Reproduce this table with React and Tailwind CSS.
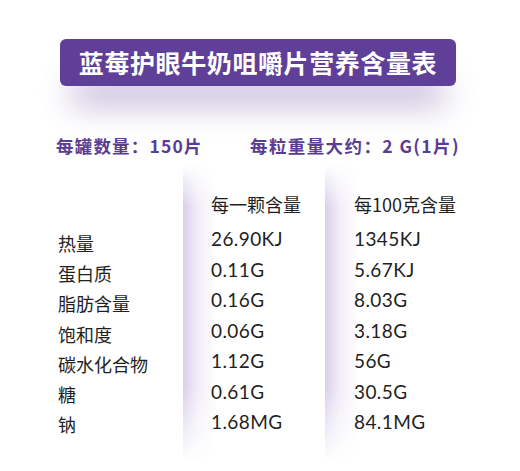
import React from "react";

const rows = [
  ["热量", "26.90KJ", "1345KJ"],
  ["蛋白质", "0.11G", "5.67KJ"],
  ["脂肪含量", "0.16G", "8.03G"],
  ["饱和度", "0.06G", "3.18G"],
  ["碳水化合物", "1.12G", "56G"],
  ["糖", "0.61G", "30.5G"],
  ["钠", "1.68MG", "84.1MG"],
];

const cjk = "font-['Noto_Sans_CJK_SC',sans-serif]";
const panel =
  "bg-[linear-gradient(to_bottom,#fff_0%,rgba(255,255,255,0)_14%,rgba(255,255,255,0)_72%,#fff_96%),linear-gradient(to_right,#d9cfea_0px,#f1ecf7_14px,#fff_34px)]";

const App = () => {
  return (
    <div className={`w-[520px] h-[471px] bg-white overflow-hidden ${cjk}`}>
      <div className="pt-[39px] pl-[60px]">
        <div className="w-[396px] h-[47px] rounded-[6px] bg-[#5f3f98] flex items-center justify-center shadow-[0_30px_32px_-12px_rgba(95,63,152,0.42)]">
          <h1 className="text-white text-[25px] font-bold tracking-[0.6px] leading-none">
            蓝莓护眼牛奶咀嚼片营养含量表
          </h1>
        </div>
      </div>

      <div className="flex mt-[50px] pl-[56px] text-[#5a3d92] text-[17.5px] font-bold leading-[20px]">
        <span className="w-[194px] tracking-[1.2px]">每罐数量：150片</span>
        <span className="tracking-[1.4px]">每粒重量大约：2 G(1片)</span>
      </div>

      <div className="flex mt-[8px] text-[#1f1f1f] text-[18px]">
        <div className="w-[183px] pl-[58px] pt-[64px]">
          {rows.map((r) => (
            <div key={r[0]} className="h-[30.2px] leading-[30px] whitespace-nowrap">
              {r[0]}
            </div>
          ))}
        </div>
        <div className={`w-[142px] h-[310px] pl-[28px] pt-[25px] ${panel}`}>
          <div className="h-[35px] leading-[30px]">每一颗含量</div>
          {rows.map((r) => (
            <div key={r[0]} className="h-[30.5px] leading-[30px] text-[19px] tracking-[0.4px] font-['Lato',sans-serif]">
              {r[1]}
            </div>
          ))}
        </div>
        <div className={`w-[170px] h-[310px] pl-[29px] pt-[25px] ${panel}`}>
          <div className="h-[35px] leading-[30px]">每100克含量</div>
          {rows.map((r) => (
            <div key={r[0]} className="h-[30.5px] leading-[30px] text-[19px] tracking-[0.4px] font-['Lato',sans-serif]">
              {r[2]}
            </div>
          ))}
        </div>
      </div>
    </div>
  );
};

export default App;
